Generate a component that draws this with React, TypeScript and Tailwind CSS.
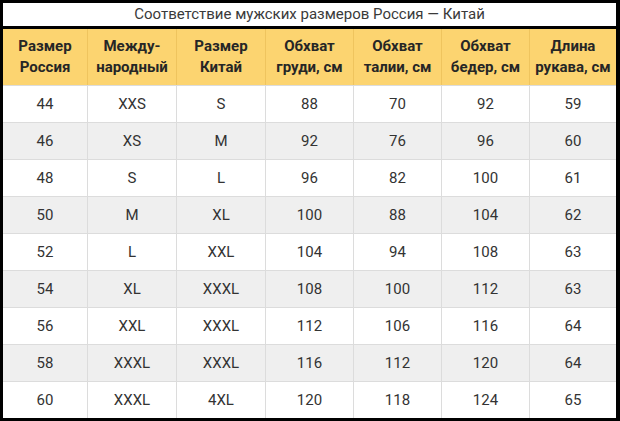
import React from "react";

const headers: [string, string][] = [
  ["Размер", "Россия"],
  ["Между-", "народный"],
  ["Размер", "Китай"],
  ["Обхват", "груди, см"],
  ["Обхват", "талии, см"],
  ["Обхват", "бедер, см"],
  ["Длина", "рукава, см"],
];

const rows: string[][] = [
  ["44", "XXS", "S", "88", "70", "92", "59"],
  ["46", "XS", "M", "92", "76", "96", "60"],
  ["48", "S", "L", "96", "82", "100", "61"],
  ["50", "M", "XL", "100", "88", "104", "62"],
  ["52", "L", "XXL", "104", "94", "108", "63"],
  ["54", "XL", "XXXL", "108", "100", "112", "63"],
  ["56", "XXL", "XXXL", "112", "106", "116", "64"],
  ["58", "XXXL", "XXXL", "116", "112", "120", "64"],
  ["60", "XXXL", "4XL", "120", "118", "124", "65"],
];

export default function App() {
  return (
    <div
      className="w-[620px] h-[421px] bg-black pt-[3px] pl-[3px] pr-[4px] pb-[4px] overflow-hidden"
      style={{ fontFamily: "Roboto, 'Liberation Sans', Arial, sans-serif" }}
    >
      <div className="h-[23px] bg-white flex items-center justify-center text-[15px] text-[#3a3a3a] leading-none">
        Соответствие мужских размеров Россия — Китай
      </div>
      <div className="h-[3px] bg-black" />
      <div className="grid grid-cols-[85px_89px_89px_88px_88px_88px_86px] bg-[#fcd470] h-[56px]">
        {headers.map((h, i) => (
          <div
            key={i}
            className={`flex flex-col items-center justify-center text-[15px] font-bold text-[#262626] leading-[21px] ${
              i < 6 ? "border-r border-[#efc45e]" : ""
            }`}
          >
            <span>{h[0]}</span>
            <span>{h[1]}</span>
          </div>
        ))}
      </div>
      {rows.map((r, ri) => (
        <div
          key={ri}
          className={`grid grid-cols-[85px_89px_89px_88px_88px_88px_86px] h-[37px] border-t border-[#dcdcdc] ${
            ri % 2 === 1 ? "bg-[#efefef]" : "bg-white"
          }`}
        >
          {r.map((c, ci) => (
            <div
              key={ci}
              className={`flex items-center justify-center text-[15px] text-[#333333] ${
                ci < 6 ? "border-r border-[#dcdcdc]" : ""
              }`}
            >
              {c}
            </div>
          ))}
        </div>
      ))}
    </div>
  );
}
